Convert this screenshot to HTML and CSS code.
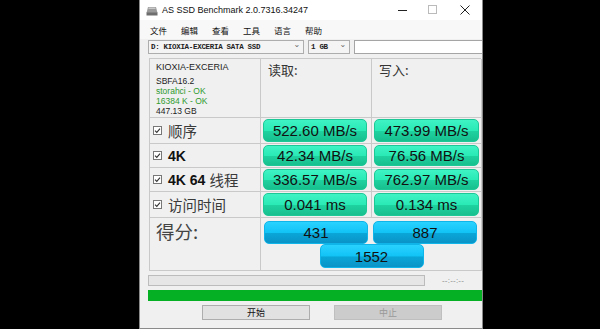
FILE: index.html
```html
<!DOCTYPE html>
<html lang="zh-CN">
<head>
  <meta charset="UTF-8" />
  <meta name="viewport" content="width=device-width, initial-scale=1.0"/>
  <title>AS SSD Benchmark</title>
  <link rel="stylesheet" href="styles.css">
</head>
<body>
  <div class="window">
    <div class="titlebar">
      <svg class="app-icon" viewBox="0 0 12 12" width="12" height="12">
        <path d="M2 3 L10 3 L11.5 9 L0.5 9 Z" fill="#9a9a9a"/>
        <rect x="0.5" y="8.5" width="11" height="3" fill="#6e6e6e"/>
        <rect x="2.5" y="3.5" width="7" height="1.5" fill="#c8c8c8"/>
      </svg>
      <span class="title">AS SSD Benchmark 2.0.7316.34247</span>
      <div class="controls">
        <span class="ctl"><svg width="10" height="10" viewBox="0 0 10 10"><path d="M0 5.5 H9" stroke="#222" stroke-width="1"/></svg></span>
        <span class="ctl"><svg width="10" height="10" viewBox="0 0 10 10"><rect x="0.5" y="0.5" width="8" height="8" fill="none" stroke="#bbb"/></svg></span>
        <span class="ctl close"><svg width="10" height="10" viewBox="0 0 10 10"><path d="M0.5 0.5 L9.5 9.5 M9.5 0.5 L0.5 9.5" stroke="#222" stroke-width="1"/></svg></span>
      </div>
    </div>

    <div class="menubar">
      <span>文件</span><span>编辑</span><span>查看</span><span>工具</span><span>语言</span><span>帮助</span>
    </div>

    <div class="toolbar">
      <div class="combo drive">D: KIOXIA-EXCERIA SATA SSD<span class="arrow">&#8964;</span></div>
      <div class="combo size">1 GB<span class="arrow">&#8964;</span></div>
      <div class="textbox"></div>
    </div>

    <div class="results">
      <div class="cell info">
        <div class="model">KIOXIA-EXCERIA</div>
        <div>SBFA16.2</div>
        <div class="ok">storahci - OK</div>
        <div class="ok">16384 K - OK</div>
        <div>447.13 GB</div>
      </div>
      <div class="cell head">读取:</div>
      <div class="cell head">写入:</div>

      <div class="cell label tall"><svg class="check" viewBox="0 0 9 9"><rect x="0.5" y="0.5" width="8" height="8" fill="#fff" stroke="#777"/><path d="M2 4.6 L3.8 6.4 L7 2.6" fill="none" stroke="#333" stroke-width="1.1"/></svg>顺序</div>
      <div class="cell bar-cell tall"><div class="bar green">522.60 MB/s</div></div>
      <div class="cell bar-cell tall last"><div class="bar green">473.99 MB/s</div></div>

      <div class="cell label"><svg class="check" viewBox="0 0 9 9"><rect x="0.5" y="0.5" width="8" height="8" fill="#fff" stroke="#777"/><path d="M2 4.6 L3.8 6.4 L7 2.6" fill="none" stroke="#333" stroke-width="1.1"/></svg><b>4K</b></div>
      <div class="cell bar-cell"><div class="bar green">42.34 MB/s</div></div>
      <div class="cell bar-cell last"><div class="bar green">76.56 MB/s</div></div>

      <div class="cell label"><svg class="check" viewBox="0 0 9 9"><rect x="0.5" y="0.5" width="8" height="8" fill="#fff" stroke="#777"/><path d="M2 4.6 L3.8 6.4 L7 2.6" fill="none" stroke="#333" stroke-width="1.1"/></svg><b>4K 64</b>&nbsp;线程</div>
      <div class="cell bar-cell"><div class="bar green">336.57 MB/s</div></div>
      <div class="cell bar-cell last"><div class="bar green">762.97 MB/s</div></div>

      <div class="cell label"><svg class="check" viewBox="0 0 9 9"><rect x="0.5" y="0.5" width="8" height="8" fill="#fff" stroke="#777"/><path d="M2 4.6 L3.8 6.4 L7 2.6" fill="none" stroke="#333" stroke-width="1.1"/></svg>访问时间</div>
      <div class="cell bar-cell"><div class="bar green">0.041 ms</div></div>
      <div class="cell bar-cell last"><div class="bar green">0.134 ms</div></div>

      <div class="cell score-label">得分:</div>
      <div class="cell score">
        <div class="score-pair">
          <div class="bar blue">431</div>
          <div class="bar blue">887</div>
        </div>
        <div class="bar blue total">1552</div>
      </div>
    </div>

    <div class="progress-row">
      <div class="progress-box"></div>
      <span class="time">--:--:--</span>
    </div>
    <div class="progress-bar"></div>

    <div class="actions">
      <button class="btn">开始</button>
      <button class="btn" disabled>中止</button>
    </div>
  </div>
</body>
</html>
```

FILE: styles.css
```css
html, body {
  margin: 0;
  height: 100%;
}
body {
  background: #000;
  font-family: "Liberation Sans", "Noto Sans CJK SC", sans-serif;
  overflow: hidden;
}
.window {
  margin-left: 139px;
  width: 342px;
  height: 328px;
  background: #f0f0f0;
  border: 1px solid #8a8a8a;
  border-top: none;
  display: flex;
  flex-direction: column;
}
.titlebar {
  height: 20px;
  background: #fff;
  display: flex;
  align-items: center;
}
.app-icon {
  margin-left: 6px;
  margin-right: 4px;
}
.title {
  font-size: 9px;
  color: #111;
}
.controls {
  margin-left: auto;
  display: flex;
  height: 20px;
}
.ctl {
  width: 30px;
  display: flex;
  align-items: center;
  justify-content: center;
}
.ctl.close {
  width: 34px;
}
.menubar {
  height: 19px;
  background: #f8f8f8;
  display: flex;
  align-items: center;
  padding-left: 3px;
  font-family: "Noto Sans CJK SC", sans-serif;
  font-size: 8.5px;
  color: #111;
}
.menubar span {
  padding: 0 7px;
}
.toolbar {
  height: 14px;
  margin-top: 1px;
  display: flex;
  gap: 4px;
  padding-left: 8px;
}
.combo {
  box-sizing: border-box;
  height: 14px;
  border: 1px solid #adadad;
  background: #f4f4f4;
  font-family: "Liberation Mono", monospace;
  font-weight: bold;
  font-size: 7.5px;
  letter-spacing: -0.3px;
  color: #222;
  padding-left: 2px;
  display: flex;
  align-items: center;
}
.combo .arrow {
  margin-left: auto;
  margin-right: 3px;
  font-family: "DejaVu Sans", sans-serif;
  font-weight: normal;
  font-size: 8px;
  color: #666;
  line-height: 1;
  margin-top: -5px;
}
.combo.drive {
  width: 156px;
}
.combo.size {
  width: 42px;
}
.textbox {
  flex: 1;
  height: 14px;
  box-sizing: border-box;
  border: 1px solid #a5a5a5;
  border-right: none;
  background: #fff;
}
.results {
  margin: 4px 0 0 9px;
  width: 332px;
  display: grid;
  grid-template-columns: 111px 111px 110px;
  grid-template-rows: 59px 26px 24px 24px 26px 53px;
  border-top: 1px solid #c9c9c9;
  border-left: 1px solid #c9c9c9;
  box-sizing: border-box;
}
.cell {
  border-right: 1px solid #c9c9c9;
  border-bottom: 1px solid #c9c9c9;
  box-sizing: border-box;
  min-width: 0;
}
.info {
  padding: 3px 0 0 6px;
  font-size: 8.5px;
  line-height: 10px;
  color: #222;
}
.info .model {
  font-size: 9px;
  line-height: 11px;
  margin-bottom: 3px;
}
.info .ok {
  color: #2f9a2f;
}
.head {
  padding: 3px 0 0 7px;
  font-family: "Noto Sans CJK SC", sans-serif;
  font-size: 13px;
  line-height: 15px;
  color: #333;
}
.label {
  display: flex;
  align-items: center;
  padding-left: 3px;
  font-family: "Liberation Sans", "Noto Sans CJK SC", sans-serif;
  font-size: 14.5px;
  color: #3a3a3a;
}
.label b {
  color: #111;
  font-weight: bold;
  font-size: 14px;
}
.check {
  width: 9px;
  height: 9px;
  margin-right: 6px;
  flex: none;
}
.bar-cell {
  padding: 1px 4px 1px 2px;
}
.bar-cell.last {
  padding-right: 2px;
}
.bar {
  height: 100%;
  box-sizing: border-box;
  border-radius: 5px;
  display: flex;
  align-items: center;
  justify-content: center;
  font-family: "Liberation Sans", sans-serif;
  font-size: 15px;
  color: #111;
}
.green {
  background: linear-gradient(#3ff3c4, #2aeab6 50%, #1ed2a0 54%, #18bf8e);
  border: 1px solid #1cc896;
}
.blue {
  background: linear-gradient(#2ad2ff, #12c3f6 50%, #0aa6d8 54%, #0b93c6);
  border: 1px solid #0fb4e8;
}
.score-label {
  padding: 2px 0 0 6px;
  font-family: "Noto Sans CJK SC", sans-serif;
  font-size: 18.5px;
  line-height: 22px;
  color: #444;
}
.score {
  grid-column: span 2;
  padding: 3px 2px 0 3px;
}
.score-pair {
  display: grid;
  grid-template-columns: 104px 104px;
  gap: 5px;
  height: 23px;
}
.total {
  width: 104px;
  height: 24px;
  margin: 0 auto;
}
.progress-row {
  display: flex;
  align-items: center;
  margin: 4px 0 0 8px;
  height: 11px;
}
.progress-box {
  width: 277px;
  height: 11px;
  box-sizing: border-box;
  background: #e6e6e6;
  border: 1px solid #bcbcbc;
}
.time {
  margin-left: 17px;
  font-size: 8px;
  color: #888;
  letter-spacing: 0.2px;
}
.progress-bar {
  margin: 4px 0 0 8px;
  width: 334px;
  height: 11px;
  background: #06b025;
}
.actions {
  display: flex;
  gap: 24px;
  margin: 4px 0 0 62px;
}
.btn {
  width: 108px;
  height: 15px;
  padding: 0;
  border: 1px solid #adadad;
  background: #e1e1e1;
  font-family: "Noto Sans CJK SC", sans-serif;
  font-size: 9px;
  color: #111;
}
.btn:disabled {
  background: #cccccc;
  border-color: #bfbfbf;
  color: #999;
}
```
